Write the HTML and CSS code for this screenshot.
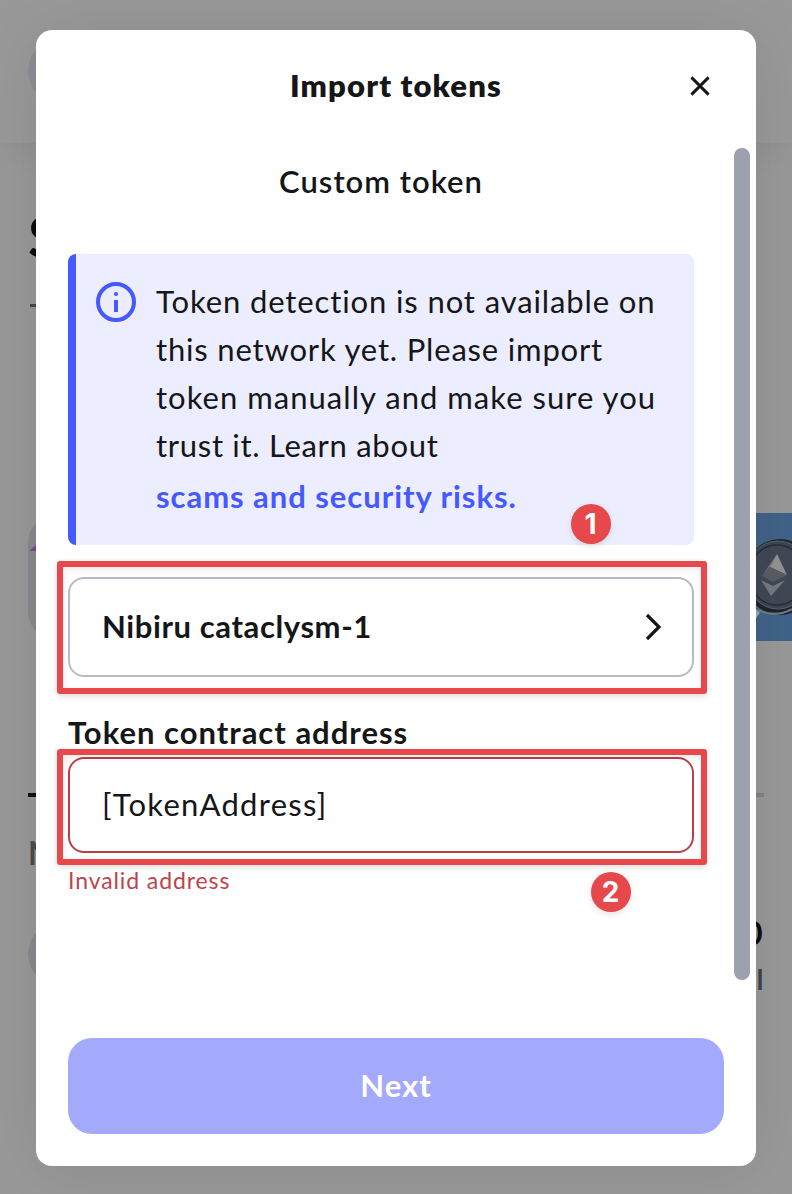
FILE: index.html
```
<!DOCTYPE html>
<html lang="en">
<head>
<meta charset="utf-8">
<title>Import tokens</title>
<link rel="stylesheet" href="styles.css">
</head>
<body>
<div class="wallet">
  <div class="wallet-header"></div>
  <span class="piece avatar"></span>
  <span class="piece heading">S</span>
  <span class="piece dash"></span>
  <svg class="piece network" width="60" height="128" viewBox="0 0 60 128"><rect width="128" height="128" rx="30" fill="#888a8f"/><path d="M1 38L14 27V38Z" fill="#7a489a"/></svg>
  <svg class="piece banner" width="36" height="128" viewBox="0 0 36 128">
    <rect width="36" height="128" fill="#416389"/>
    <path d="M0 96L4 100L0 105Z" fill="#a4a4a4"/>
    <ellipse cx="24" cy="64" rx="36" ry="38" fill="#20242d"/>
    <path d="M2 97Q20 105 36 96" fill="none" stroke="#777d88" stroke-width="2"/>
    <ellipse cx="22" cy="62" rx="32" ry="34" fill="#3e4654" stroke="#596170" stroke-width="1"/>
    <ellipse cx="21" cy="62" rx="28" ry="30" fill="#414856" stroke="#282d38" stroke-width="1.5"/>
    <path d="M21 41L6 63L14 54Z" fill="#767980"/><path d="M21 41L31 62L14 54Z" fill="#929292"/>
    <path d="M6 63L14 54L31 62L17 69Z" fill="#5a5d65"/><path d="M5 67L17 73L29 67L15 83Z" fill="#777a80"/>
  </svg>
  <span class="piece tab-on"></span>
  <span class="piece tab-off"></span>
  <span class="piece tab-name">N</span>
  <span class="piece coin"></span>
  <span class="piece amount">0</span>
  <span class="piece symbol">I</span>
</div>
<main class="modal">
  <header class="modal-header">
    <h1>Import tokens</h1>
    <button class="close" aria-label="Close"><svg width="20" height="20" viewBox="0 0 20 20"><path d="M1.4 1.4L18.6 18.6M18.6 1.4L1.4 18.6" stroke="#141618" stroke-width="2.9"/></svg></button>
  </header>
  <section class="body">
    <div class="content">
      <h2>Custom token</h2>
      <div class="notice">
        <svg class="info" width="40" height="40" viewBox="0 0 40 40"><circle cx="20" cy="20" r="18" fill="none" stroke="#4459ff" stroke-width="4"/><circle cx="20" cy="12" r="2.1" fill="#4459ff"/><path d="M18 18h4v12h-4z" fill="#4459ff"/></svg>
        <div class="message">
          <p>Token detection is not available on<br><span class="line-two">this network yet. Please import</span><br><span class="line-three">token manually and make sure you</span><br><span class="line-four">trust it. Learn about</span></p>
          <a>scams and security risks.</a>
        </div>
      </div>
      <button class="select"><span class="network-name">Nibiru cataclysm-1</span><svg width="18" height="28" viewBox="0 0 18 28"><path d="M2 2L14 14L2 26" fill="none" stroke="#141618" stroke-width="3.2"/></svg></button>
      <label class="label">Token contract address</label>
      <div class="field"><span class="value">[TokenAddress]</span></div>
      <p class="error"><span>Invalid address</span></p>
    </div>
    <div class="scrollbar"></div>
  </section>
  <button class="next"><span>Next</span></button>
</main>
<div class="mark mark-network"></div>
<div class="mark mark-address"></div>
<span class="badge badge-one">1</span>
<span class="badge badge-two">2</span>
</body>
</html>
```
FILE: styles.css
```
* { box-sizing: border-box; }
body {
  margin: 0; width: 792px; height: 1194px; position: relative; overflow: hidden;
  padding: 30px 36px 28px; background: #999;
  font: 400 31px/48px Lato, "Open Sans", sans-serif; color: #141618;
}
h1, h2, p { margin: 0; }
button { font: inherit; color: inherit; border: 0; padding: 0; background: none; }
.wallet { position: absolute; inset: 0; overflow: hidden; }
.wallet-header { height: 143px; box-shadow: 0 0 32px rgba(0,0,0,.08); background: #999; }
.piece { position: absolute; line-height: 1; }
.avatar { left: 28px; top: 38px; width: 66px; height: 66px; border-radius: 50%; background: #8d8f94; }
.heading { left: 28px; top: 207px; font-size: 58px; font-weight: 700; color: #0c0d0e; }
.dash { left: 30px; top: 304px; width: 12px; height: 3px; background: #454852; }
.network { left: 28px; top: 513px; }
.banner { left: 756px; top: 513px; }
.tab-on { left: 28px; top: 793px; width: 200px; height: 4px; background: #0c0d0e; }
.tab-off { left: 564px; top: 793px; width: 200px; height: 4px; background: #808188; }
.tab-name { left: 28px; top: 837px; font-size: 32px; color: #4c4c4c; font-weight: 700; }
.coin { left: 28px; top: 922px; width: 64px; height: 64px; border-radius: 50%; background: #888a8f; }
.amount { left: 744px; top: 917px; font-size: 32px; font-weight: 700; color: #0c0d0e; }
.symbol { left: 756px; top: 965px; font-size: 28px; font-weight: 600; color: #3f424b; }

.modal {
  position: relative; display: flex; flex-direction: column; width: 720px; height: 1136px;
  padding: 32px; background: #fff; border-radius: 16px; box-shadow: 0 4px 70px rgba(0,0,0,.1);
}
.modal-header { display: grid; grid-template-columns: 48px 1fr 48px; align-items: center; height: 48px; }
h1 { grid-column: 2; font-size: 31px; font-weight: 800; text-align: center; line-height: 46px; height: 48px; white-space: nowrap; letter-spacing: 1.15px; }
.close { display: flex; align-items: center; justify-content: center; height: 48px; }
.body { display: flex; justify-content: space-between; height: 832px; margin: 38px -26px 58px 0; }
.content { width: 626px; padding-top: 9px; }
h2 { font-size: 31px; font-weight: 600; text-align: center; line-height: 48px; letter-spacing: 1px; }
.notice {
  display: flex; gap: 20px; height: 291px; margin-top: 49px; padding: 23px 20px;
  border-left: 8px solid #4459ff; border-radius: 8px; background: #ecedfe;
}
.info { flex: none; margin-top: 5px; }
.message { white-space: nowrap; }
.message p { letter-spacing: .89px; }
.line-two { letter-spacing: .82px; }
.line-three { letter-spacing: 1.03px; }
.line-four { letter-spacing: .7px; }
.message a { display: block; margin-top: 3px; font-weight: 700; color: #4459ff; letter-spacing: .95px; }
.select {
  display: flex; align-items: center; justify-content: space-between; width: 100%; height: 100px;
  margin-top: 32px; padding: 0 29px 0 32px; border: 2px solid #b7bac8; border-radius: 16px; font-weight: 700;
}
.network-name { padding-bottom: 2px; letter-spacing: .6px; }
.label { display: block; height: 49px; margin-top: 31px; font-weight: 700; line-height: 48px; letter-spacing: 1px; }
.field { display: flex; align-items: center; height: 96px; padding-left: 32px; border: 2px solid #b94048; border-radius: 16px; }
.value { padding-bottom: 2px; letter-spacing: 1.25px; }
.error { margin-top: 7px; color: #bd444d; font-size: 23px; line-height: 40px; letter-spacing: .9px; }
.scrollbar { width: 16px; border-radius: 8px; background: #9da1ae; }
.next { height: 96px; padding-bottom: 2px; border-radius: 24px; background: #a3aafb; color: #fff; font-weight: 700; letter-spacing: 1px; }

.mark { position: absolute; left: 57px; width: 650px; border: 6px solid #e6484b; border-radius: 3px; box-shadow: 0 2px 6px rgba(0,0,0,.15), inset 0 2px 6px rgba(0,0,0,.1); }
.mark-network { top: 561px; height: 133px; }
.mark-address { top: 749px; height: 116px; }
.badge {
  position: absolute; width: 40px; height: 40px; border-radius: 50%; background: #e6484b; color: #fff;
  font: 700 28px/40px Inter, sans-serif; text-align: center; box-shadow: 0 2px 6px rgba(0,0,0,.12);
}
.badge-one { left: 570.5px; top: 504px; }
.badge-two { left: 590.5px; top: 872px; }
```
